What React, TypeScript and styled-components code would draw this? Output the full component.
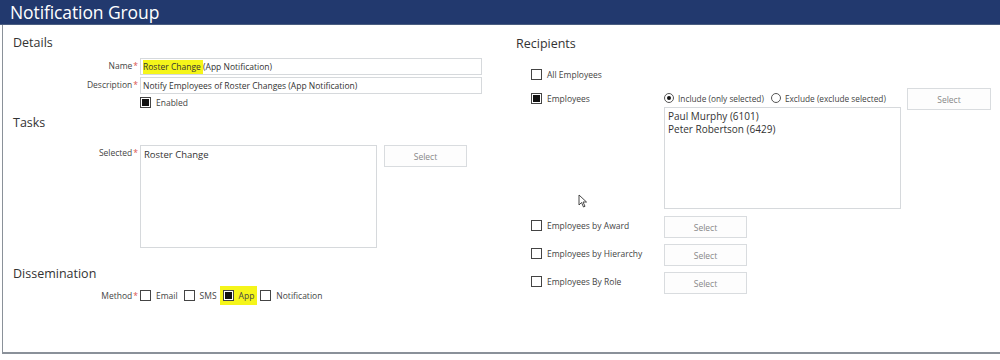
import React from "react";
import styled, { createGlobalStyle } from "styled-components";

const Global = createGlobalStyle`
  html, body { margin: 0; padding: 0; background: #fff; }
  body { font-family: "Open Sans", "Noto Sans", sans-serif; color: #333; }
  * { box-sizing: border-box; }
`;

const Header = styled.div`
  height: 25px;
  background: #22396e;
  border-bottom: 1px solid #4a5d80;
  padding-left: 10px;
  display: flex;
  align-items: center;
`;

const Title = styled.h1`
  margin: 0;
  font-size: 17.5px;
  font-weight: 400;
  color: #fff;
  letter-spacing: -0.1px;
`;

const Panel = styled.div`
  margin-left: 2px;
  height: 329px;
  border-left: 1px solid #8a9199;
  border-bottom: 2px solid #8a9199;
  display: grid;
  grid-template-columns: 511px 1fr;
`;

const Column = styled.div`
  display: flex;
  flex-direction: column;
`;

const SectionTitle = styled.div<{ $top: number; $left?: number }>`
  margin-top: ${(p) => p.$top}px;
  padding-left: ${(p) => p.$left ?? 10}px;
  font-size: 12.5px;
  line-height: 15px;
  color: #333;
`;

const FieldRow = styled.div<{ $top: number }>`
  display: grid;
  grid-template-columns: 137px auto;
  align-items: start;
  margin-top: ${(p) => p.$top}px;
`;

const Label = styled.div`
  text-align: right;
  font-size: 8.5px;
  line-height: 16px;
  color: #444;
  padding-right: 2px;
`;

const Req = styled.span`
  color: #d9534f;
  margin-left: 1px;
`;

const Controls = styled.div`
  display: flex;
  align-items: flex-start;
`;

const Input = styled.div`
  width: 342px;
  height: 17px;
  border: 1px solid #d6d9dc;
  font-size: 8.5px;
  line-height: 15px;
  padding-left: 2px;
  color: #333;
  white-space: nowrap;
`;

const Mark = styled.span`
  background: #f5f51a;
  padding: 1px 0 2px;
`;

const TextArea = styled.div<{ $w: number; $h: number; $fs: number }>`
  width: ${(p) => p.$w}px;
  height: ${(p) => p.$h}px;
  border: 1px solid #d6d9dc;
  font-size: ${(p) => p.$fs}px;
  line-height: 13px;
  padding: 2px 3px;
  color: #333;
`;

const SelectButton = styled.div<{ $w?: number; $ml?: number; $mt?: number }>`
  width: ${(p) => p.$w ?? 83}px;
  height: 22px;
  margin-left: ${(p) => p.$ml ?? 0}px;
  margin-top: ${(p) => p.$mt ?? 0}px;
  border: 1px solid #d9dcdf;
  background: #fdfdfd;
  font-size: 8.5px;
  color: #888;
  display: flex;
  align-items: center;
  justify-content: center;
`;

const Box = styled.span<{ $checked?: boolean }>`
  display: inline-block;
  width: 11px;
  height: 11px;
  border: 1px solid #444;
  background: #fff;
  position: relative;
  flex: none;
  &::after {
    content: "";
    display: ${(p) => (p.$checked ? "block" : "none")};
    position: absolute;
    left: 1px;
    top: 1px;
    width: 7px;
    height: 7px;
    background: #111;
  }
`;

const Radio = styled.span<{ $checked?: boolean }>`
  display: inline-block;
  width: 10px;
  height: 10px;
  border: 1px solid #555;
  border-radius: 50%;
  position: relative;
  flex: none;
  &::after {
    content: "";
    display: ${(p) => (p.$checked ? "block" : "none")};
    position: absolute;
    left: 2px;
    top: 2px;
    width: 4px;
    height: 4px;
    border-radius: 50%;
    background: #111;
  }
`;

const Check = styled.label<{ $highlight?: boolean }>`
  display: inline-flex;
  align-items: center;
  gap: 5px;
  font-size: 8.5px;
  color: #444;
  height: 19px;
  padding: 0 ${(p) => (p.$highlight ? "3px" : "0")};
  margin-left: ${(p) => (p.$highlight ? "-3px" : "0")};
  margin-right: ${(p) => (p.$highlight ? "-3px" : "0")};
  background: ${(p) => (p.$highlight ? "#f5f51a" : "transparent")};
`;

const CheckGroup = styled.div`
  display: flex;
  align-items: center;
  gap: 6px;
  margin-top: -2px;
`;

const RecipientRow = styled.div<{ $top: number }>`
  display: grid;
  grid-template-columns: 133px max-content max-content;
  justify-content: start;
  align-items: start;
  margin-top: ${(p) => p.$top}px;
  padding-left: 17px;
`;

const RecipientLabel = styled.div`
  display: flex;
  align-items: center;
  gap: 5px;
  font-size: 8.5px;
  color: #444;
  height: 11px;
  margin-top: 4px;
`;

const RadioLine = styled.div`
  display: flex;
  align-items: center;
  gap: 4px;
  font-size: 8.3px;
  color: #444;
  height: 14px;
  margin-top: 2px;
  margin-bottom: 2px;
  white-space: nowrap;
`;

const RadioItem = styled.span`
  display: inline-flex;
  align-items: center;
  gap: 4px;
  margin-right: 3px;
`;

const Stack = styled.div`
  display: flex;
  flex-direction: column;
  width: 237px;
`;

const Cursor = styled.div`
  position: relative;
  height: 0;
  svg {
    position: absolute;
    left: 64px;
    top: -15px;
  }
`;

export default function App() {
  return (
    <>
      <Global />
      <Header>
        <Title>Notification Group</Title>
      </Header>
      <Panel>
        <Column>
          <SectionTitle $top={10}>Details</SectionTitle>
          <FieldRow $top={8}>
            <Label>
              Name<Req>*</Req>
            </Label>
            <Controls>
              <Input>
                <Mark>Roster Change </Mark>(App Notification)
              </Input>
            </Controls>
          </FieldRow>
          <FieldRow $top={2}>
            <Label>
              Description<Req>*</Req>
            </Label>
            <Controls>
              <Input>Notify Employees of Roster Changes (App Notification)</Input>
            </Controls>
          </FieldRow>
          <FieldRow $top={-1}>
            <div />
            <Controls>
              <Check>
                <Box $checked />
                Enabled
              </Check>
            </Controls>
          </FieldRow>
          <SectionTitle $top={3}>Tasks</SectionTitle>
          <FieldRow $top={15}>
            <Label>
              Selected<Req>*</Req>
            </Label>
            <Controls>
              <TextArea $w={237} $h={103} $fs={9.5}>
                Roster Change
              </TextArea>
              <SelectButton $ml={7}>Select</SelectButton>
            </Controls>
          </FieldRow>
          <SectionTitle $top={18}>Dissemination</SectionTitle>
          <FieldRow $top={7}>
            <Label>
              Method<Req>*</Req>
            </Label>
            <Controls>
              <CheckGroup>
                <Check>
                  <Box />
                  Email
                </Check>
                <Check>
                  <Box />
                  SMS
                </Check>
                <Check $highlight>
                  <Box $checked />
                  App
                </Check>
                <Check>
                  <Box />
                  Notification
                </Check>
              </CheckGroup>
            </Controls>
          </FieldRow>
        </Column>
        <Column>
          <SectionTitle $top={11} $left={2}>
            Recipients
          </SectionTitle>
          <RecipientRow $top={14}>
            <RecipientLabel>
              <Box />
              All Employees
            </RecipientLabel>
          </RecipientRow>
          <RecipientRow $top={9}>
            <RecipientLabel>
              <Box $checked />
              Employees
            </RecipientLabel>
            <Stack>
              <RadioLine>
                <RadioItem>
                  <Radio $checked />
                  Include (only selected)
                </RadioItem>
                <RadioItem>
                  <Radio />
                  Exclude (exclude selected)
                </RadioItem>
              </RadioLine>
              <TextArea $w={237} $h={102} $fs={10}>
                Paul Murphy (6101)
                <br />
                Peter Robertson (6429)
              </TextArea>
            </Stack>
            <SelectButton $ml={6} $w={84} $mt={-1}>
              Select
            </SelectButton>
          </RecipientRow>
          <Cursor>
            <svg width="10" height="14" viewBox="0 0 10 14">
              <path d="M1 1 L1 11 L3.5 8.5 L5.5 13 L7 12.3 L5 8 L8.5 8 Z" fill="#fff" stroke="#333" strokeWidth="0.9" />
            </svg>
          </Cursor>
          <RecipientRow $top={7}>
            <RecipientLabel>
              <Box />
              Employees by Award
            </RecipientLabel>
            <SelectButton>Select</SelectButton>
          </RecipientRow>
          <RecipientRow $top={6}>
            <RecipientLabel>
              <Box />
              Employees by Hierarchy
            </RecipientLabel>
            <SelectButton>Select</SelectButton>
          </RecipientRow>
          <RecipientRow $top={6}>
            <RecipientLabel>
              <Box />
              Employees By Role
            </RecipientLabel>
            <SelectButton>Select</SelectButton>
          </RecipientRow>
        </Column>
      </Panel>
    </>
  );
}
